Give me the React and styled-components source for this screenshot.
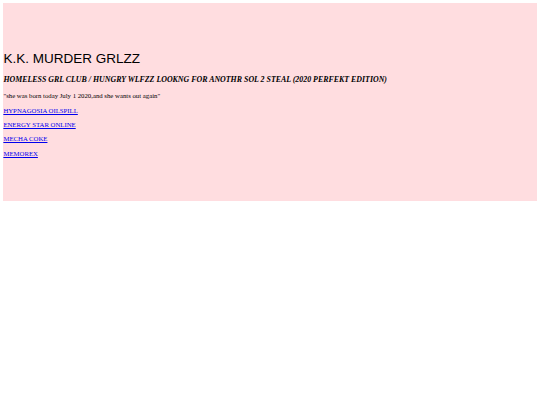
import React from "react";
import styled, { createGlobalStyle } from "styled-components";

const Global = createGlobalStyle`
  html, body { background: #ffffff; }
  body {
    margin: 3.375px;
    font-family: "Liberation Serif", "Times New Roman", serif;
    font-size: 6.75px;
    color: #000;
  }
`;

const Banner = styled.div`
  background: #ffdde0;
  padding: 38.9px 0 37.1px;
`;

const Title = styled.h1`
  font-family: "Liberation Sans", Arial, sans-serif;
  font-weight: normal;
  font-size: 13.5px;
  line-height: 15.19px;
  margin: 9.05px 0;
  color: #000;
`;

const Subtitle = styled.h3`
  font-family: "Liberation Serif", "Times New Roman", serif;
  font-style: italic;
  font-weight: bold;
  font-size: 7.9px;
  line-height: 8.86px;
  margin: 7.9px 0;
  color: #000;
`;

const Para = styled.p`
  margin: 6.75px 0;
  font-size: 6.75px;
  line-height: 7.59px;
  color: #000;
`;

const Link = styled.a`
  color: #0000ee;
  text-decoration: underline;
`;

const links = ["HYPNAGOSIA OILSPILL", "ENERGY STAR ONLINE", "MECHA COKE", "MEMOREX"];

export default function App() {
  return (
    <>
      <Global />
      <Banner>
        <Title>K.K. MURDER GRLZZ</Title>
        <Subtitle>HOMELESS GRL CLUB / HUNGRY WLFZZ LOOKNG FOR ANOTHR SOL 2 STEAL (2020 PERFEKT EDITION)</Subtitle>
        <Para>"she was born today July 1 2020,and she wants out again"</Para>
        {links.map((l) => (
          <Para key={l}>
            <Link href="#">{l}</Link>
          </Para>
        ))}
      </Banner>
    </>
  );
}
